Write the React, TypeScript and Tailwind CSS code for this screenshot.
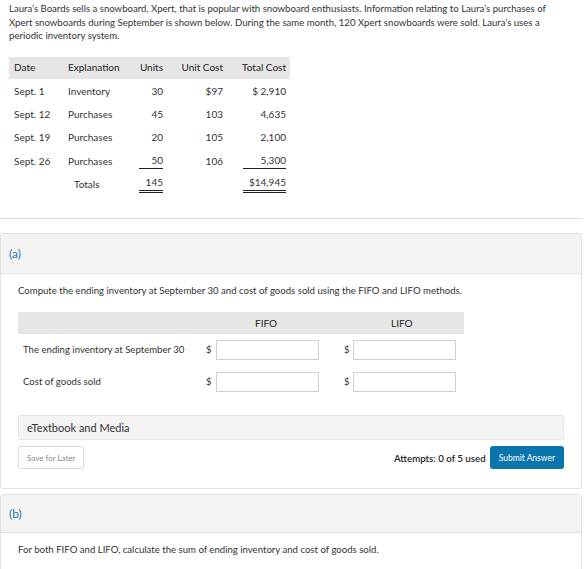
import React from 'react';

const rows = [
  { date: 'Sept. 1', exp: 'Inventory', units: '30', cost: '$97', total: '$ 2,910' },
  { date: 'Sept. 12', exp: 'Purchases', units: '45', cost: '103', total: '4,635' },
  { date: 'Sept. 19', exp: 'Purchases', units: '20', cost: '105', total: '2,100' },
  { date: 'Sept. 26', exp: 'Purchases', units: '50', cost: '106', total: '5,300', line: true },
];

const cols = 'grid grid-cols-[54px_67px_38px_60px_62px]';

function DataTable() {
  return (
    <div className="w-[281px] text-[10px] text-[#333]">
      <div className={`${cols} h-[22px] items-center bg-[#e6e6e6] text-[#222]`}>
        <div className="pl-[5px]">Date</div>
        <div className="pl-[5px]">Explanation</div>
        <div className="pr-[5px] text-right">Units</div>
        <div className="pr-[5px] text-right">Unit Cost</div>
        <div className="pr-[4px] text-right">Total Cost</div>
      </div>
      <div className="pt-[1px]">
        {rows.map((r) => (
          <div key={r.date} className={`${cols} h-[23.3px] items-center`}>
            <div className="pl-[5px]">{r.date}</div>
            <div className="pl-[5px]">{r.exp}</div>
            <div className="pr-[5px] flex justify-end">
              <span className={`w-[24px] text-right ${r.line ? 'border-b border-[#222]' : ''}`}>{r.units}</span>
            </div>
            <div className="pr-[5px] text-right">{r.cost}</div>
            <div className="pr-[4px] flex justify-end">
              <span className={`w-[43px] text-right whitespace-pre ${r.line ? 'border-b border-[#222]' : ''}`}>
                {r.total}
              </span>
            </div>
          </div>
        ))}
        <div className={`${cols} h-[23.3px] items-center`}>
          <div />
          <div className="pl-[11px]">Totals</div>
          <div className="pr-[5px] flex justify-end">
            <span className="w-[24px] text-right border-b-[3px] border-double border-[#222]">145</span>
          </div>
          <div />
          <div className="pr-[4px] flex justify-end">
            <span className="w-[43px] text-right border-b-[3px] border-double border-[#222]">$14,945</span>
          </div>
        </div>
      </div>
    </div>
  );
}

function AnswerRow({ label }: { label: string }) {
  return (
    <div className="flex items-center h-[20px]">
      <div className="w-[188px] pl-[5px]">{label}</div>
      <span className="w-[10px]">$</span>
      <div className="w-[103px] h-[20px] border border-[#cfcfcf] bg-white" />
      <span className="ml-[25px] w-[9px]">$</span>
      <div className="w-[103px] h-[20px] border border-[#cfcfcf] bg-white" />
    </div>
  );
}

export default function App() {
  return (
    <div className="w-[586px] h-[569px] overflow-hidden bg-white text-[#333] font-['Lato','Liberation_Sans',sans-serif]">
      {/* question intro */}
      <div className="border-b border-[#dcdcdc] pl-[9px] pt-[2px] pb-[22px] mr-[4px]">
        <p className="text-[9.6px] leading-[13.5px] text-[#333] pr-[20px]">
          Laura’s Boards sells a snowboard, Xpert, that is popular with snowboard enthusiasts. Information relating to Laura’s purchases of Xpert snowboards during September is shown below. During the same month, 120 Xpert snowboards were sold. Laura’s uses a periodic inventory system.
        </p>
        <div className="mt-[14px]">
          <DataTable />
        </div>
      </div>

      {/* part (a) */}
      <div className="mt-[14px] mr-[4px] border border-[#e2e2e2] rounded-[3px]">
        <div className="h-[40px] bg-[#f4f4f4] border-b border-[#e2e2e2] flex items-center pl-[8px] pt-[2px] text-[12px] text-[#2b73a8]">
          (a)
        </div>
        <div className="px-[17px] pt-[10px] pb-[19px] text-[9.6px]">
          <p>Compute the ending inventory at September 30 and cost of goods sold using the FIFO and LIFO methods.</p>
          <div className="mt-[14px] w-[446px] h-[22px] bg-[#e6e6e6] flex items-center text-[10px] text-[#222]">
            <div className="ml-[237px] w-[20px]">FIFO</div>
            <div className="ml-[116px]">LIFO</div>
          </div>
          <div className="mt-[6px] flex flex-col gap-[12px]">
            <AnswerRow label="The ending inventory at September 30" />
            <AnswerRow label="Cost of goods sold" />
          </div>
          <div className="mt-[23px] h-[25px] bg-[#f4f4f4] border border-[#e4e4e4] rounded-[2px] flex items-center pl-[8px] text-[11px] text-[#333]">
            eTextbook and Media
          </div>
          <div className="mt-[6px] flex items-center justify-between">
            <div className="h-[23px] px-[8px] border border-[#dcdcdc] rounded-[2px] flex items-center text-[8px] text-[#888]">
              Save for Later
            </div>
            <div className="flex items-center gap-[4px]">
              <span className="text-[9.7px] font-semibold text-[#222]">Attempts: 0 of 5 used</span>
              <div className="h-[23px] px-[9px] bg-[#0a74ad] rounded-[3px] flex items-center text-[8.5px] text-white">
                Submit Answer
              </div>
            </div>
          </div>
        </div>
      </div>

      {/* part (b) */}
      <div className="mt-[5px] mr-[4px] border border-[#e2e2e2] rounded-[3px]">
        <div className="h-[38px] bg-[#f4f4f4] border-b border-[#e2e2e2] flex items-center pl-[8px] text-[12px] text-[#2b73a8]">
          (b)
        </div>
        <div className="px-[17px] pt-[10px] pb-[20px] text-[9.6px]">
          <p>For both FIFO and LIFO, calculate the sum of ending inventory and cost of goods sold.</p>
        </div>
      </div>
    </div>
  );
}
